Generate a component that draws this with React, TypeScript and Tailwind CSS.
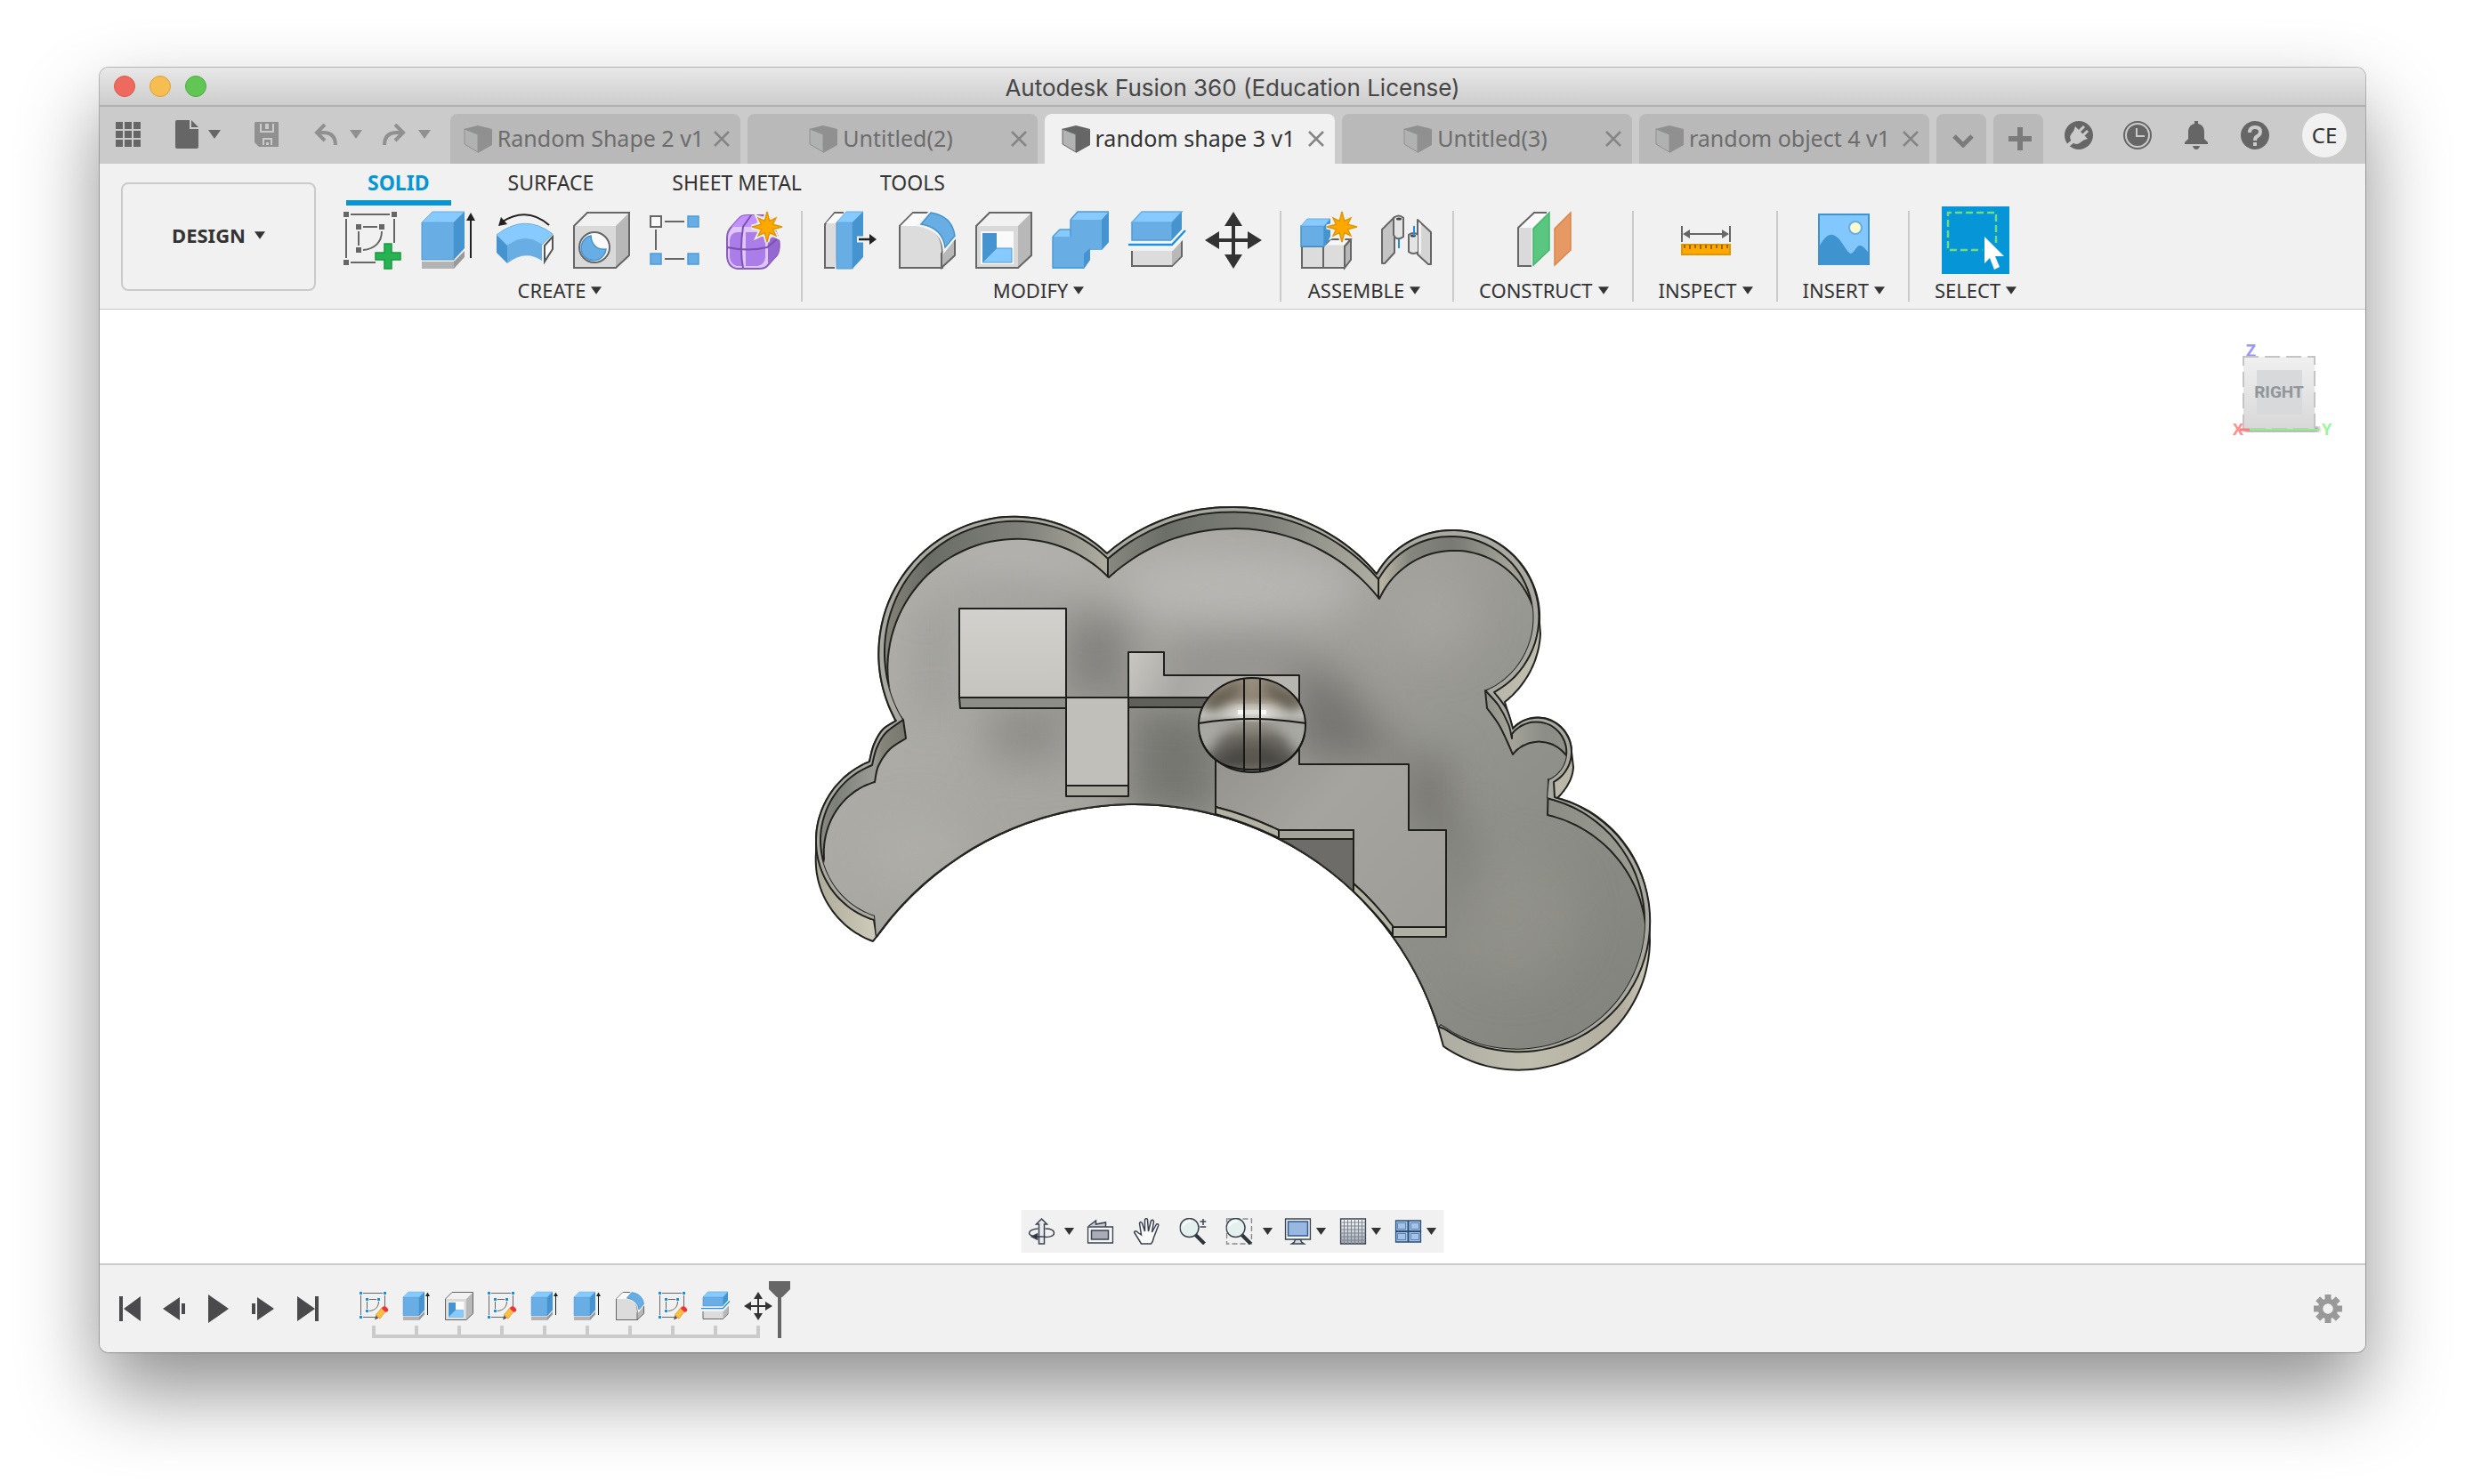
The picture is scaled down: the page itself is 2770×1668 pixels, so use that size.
import type { ReactNode } from "react";

type Pt = [number, number];

/* ---------- path helpers ---------- */

function curve(pts: Pt[], first = false): string {
  let d = `${first ? "M" : "L"}${pts[0][0]} ${pts[0][1]}`;
  for (let i = 0; i < pts.length - 1; i++) {
    const a = pts[i - 1] ?? pts[i];
    const b = pts[i];
    const c = pts[i + 1];
    const e = pts[i + 2] ?? c;
    d += `C${(b[0] + (c[0] - a[0]) / 6).toFixed(1)} ${(b[1] + (c[1] - a[1]) / 6).toFixed(1)} ${(c[0] - (e[0] - b[0]) / 6).toFixed(1)} ${(c[1] - (e[1] - b[1]) / 6).toFixed(1)} ${c[0]} ${c[1]}`;
  }
  return d;
}

function shape(parts: Pt[][]): string {
  return parts.map((p, i) => curve(p, i === 0)).join("") + "Z";
}

/* Points along a circle from one point to another; the ends are blended so that they meet the given points. */
function arc(cx: number, cy: number, r: number, from: Pt, to: Pt, clockwise = true): Pt[] {
  const n = 24;
  const a0 = Math.atan2(from[1] - cy, from[0] - cx);
  let a1 = Math.atan2(to[1] - cy, to[0] - cx);
  if (clockwise && a1 < a0) a1 += 2 * Math.PI;
  if (!clockwise && a1 > a0) a1 -= 2 * Math.PI;
  const d0 = Math.hypot(from[0] - cx, from[1] - cy) - r;
  const d1 = Math.hypot(to[0] - cx, to[1] - cy) - r;
  return Array.from({ length: n + 1 }, (_, i): Pt => {
    const t = i / n;
    const q = r + d0 * (1 - t) ** 3 + d1 * t ** 3;
    const a = a0 + (a1 - a0) * t;
    return [Math.round((cx + q * Math.cos(a)) * 10) / 10, Math.round((cy + q * Math.sin(a)) * 10) / 10];
  });
}

/* ---------- small shared pieces ---------- */

function Caret({ className }: { className: string }) {
  return (
    <svg viewBox="0 0 14 10" className={className} fill="currentColor" aria-hidden="true">
      <path d="M0 0h14L7 10z" />
    </svg>
  );
}

function Icon({ children, size = "size-16" }: { children: ReactNode; size?: string }) {
  return (
    <svg viewBox="0 0 64 64" className={`${size} shrink-0 overflow-visible`} fill="none" aria-hidden="true">
      {children}
    </svg>
  );
}

const Star = ({ x, y }: { x: number; y: number }) => {
  const pts = Array.from({ length: 16 }, (_, i) => {
    const r = i % 2 ? 7 : i % 4 === 0 ? 17 : 14;
    const a = (i * Math.PI) / 8 - Math.PI / 2;
    return `${(x + r * Math.cos(a)).toFixed(1)},${(y + r * Math.sin(a)).toFixed(1)}`;
  }).join(" ");
  return (
    <>
      <polygon points={pts} fill="none" stroke="#f1f1f1" strokeWidth="5" />
      <polygon points={pts} fill="#ffa900" stroke="#e39600" strokeWidth="1.5" />
    </>
  );
};

/* ---------- feature glyphs ---------- */

const SketchLines = ({ node }: { node: string }) => (
  <>
    <g stroke="#666" strokeWidth="2">
      <path d="M8 3h44M3 8v44M8 57h28M57 8v27M22 17h16M17 22v16M43 22C43 34 35 42 22 43" />
    </g>
    <g fill={node}>
      <path d="M0 0h6v6H0zM54 0h6v6h-6zM0 54h6v6H0zM14 14h6v6h-6zM40 14h6v6h-6zM14 40h6v6h-6z" />
    </g>
  </>
);

const CreateSketch = () => (
  <>
    <SketchLines node="#666" />
    <path d="M46 36h8v10h10v8H54v10h-8V54H36v-8h10z" fill="#27b351" stroke="#159a3e" strokeWidth="1.5" />
  </>
);

const EditSketch = () => (
  <>
    <SketchLines node="#1a8fe8" />
    <path d="M34 63l3-11 6 7z" fill="#555" />
    <path d="M37 52L50 36l9 7-13 17z" fill="#fbbf45" stroke="#f0a020" strokeWidth="2" />
    <path d="M51 35q4-5 10 0t2 9l-4 2-9-8z" fill="#f23038" />
  </>
);

const Extrude = () => (
  <>
    <path d="M2 56h36v8H2z" fill="#b3b3b3" />
    <path d="M38 56l12-12v7L38 64z" fill="#999" />
    <path d="M2 12h36v42H2z" fill="#68aee4" stroke="#4f9bd6" strokeWidth="1" />
    <path d="M2 12L14 0h36L38 12z" fill="#87caff" stroke="#68aee4" strokeWidth="1" />
    <path d="M38 12L50 0v41L38 54z" fill="#4594d0" />
    <path d="M57 8v44" stroke="#222" strokeWidth="2" />
    <path d="M57 1l5 9H52z" fill="#222" />
  </>
);

const Revolve = () => (
  <>
    <path d="M59 15Q34-7 5 12" stroke="#222" strokeWidth="2" />
    <path d="M2 16l3-10 7 8z" fill="#222" />
    <path d="M0 26l12 12v20L0 46z" fill="#4594d0" />
    <path d="M0 26q32-25 63-1L51 37q-19-14-39 1z" fill="#87caff" stroke="#68aee4" strokeWidth="1" />
    <path d="M12 38q20-15 39-1v18q-19-13-39 3z" fill="#68aee4" />
    <path d="M54 38l9-10v14l-9 14z" fill="#fafafa" stroke="#555" strokeWidth="2" />
  </>
);

const GreyBox = () => (
  <>
    <path d="M1 16L16 1h47L48 16z" fill="#f1f1f1" />
    <path d="M48 16L63 1v48L48 63z" fill="#b8b8b8" />
    <path d="M1 16h47v47H1z" fill="#d9d9d9" />
    <path d="M1 16L16 1h47v48L48 63H1z" stroke="#666" strokeWidth="2" />
  </>
);

const Hole = () => (
  <>
    <GreyBox />
    <circle cx="24" cy="40" r="17" fill="#fafafa" stroke="#666" strokeWidth="2" />
    <path d="M20 27c1 11 7 16 17 15a14 14 0 1 1-17-15z" fill="#68aee4" stroke="#4594d0" strokeWidth="1.5" />
  </>
);

const Pattern = () => (
  <>
    <path d="M17 11h22M7 20v23M17 53h22" stroke="#666" strokeWidth="2" />
    <path d="M1 5h12v12H1z" fill="#f8f8f8" stroke="#666" strokeWidth="2" />
    <path d="M43 5h12v12H43zM1 47h12v12H1zM43 47h12v12H43z" fill="#68aee4" stroke="#4f9bd6" strokeWidth="1.5" />
  </>
);

const Form = () => (
  <>
    <path d="M1 29Q1 22 6 17L15 7q3-3 9-3h18q6 0 10 6l6 19q3 6 1 15-1 5-5 8l-8 9q-3 3-9 3H13Q2 63 1 50z" fill="#dfc6ff" stroke="#8a5cc0" strokeWidth="2" />
    <path d="M6 17L15 7q3-3 9-3h16l-9 13z" fill="#c292ff" />
    <path d="M4 32q1-9 9-9h5v38h-6q-7-2-8-10zM22 23h14q7 0 8 8v20q-1 9-9 10H22z" fill="#ab7de8" />
    <path d="M47 31l12-5v21l-12 11z" fill="#9567d2" />
    <path d="M19 63q-4-20 0-46l9-13M1 40q24 5 45 0l12-10" stroke="#7d51b4" strokeWidth="2" />
    <Star x={46} y={17} />
  </>
);

const PressPull = () => (
  <>
    <path d="M14 63H3V14L14 1h10" stroke="#666" strokeWidth="2" fill="#dcdcdc" />
    <path d="M4 13L14 2h12L16 13z" fill="#fafafa" />
    <path d="M16 12h18v52H16z" fill="#68aee4" stroke="#4f9bd6" strokeWidth="1" />
    <path d="M16 12L27 0h19L34 12z" fill="#87caff" stroke="#68aee4" strokeWidth="1" />
    <path d="M34 12L46 0v51L34 64z" fill="#4594d0" />
    <path d="M39 31h15" stroke="#f1f1f1" strokeWidth="7" />
    <path d="M41 31h14" stroke="#222" strokeWidth="2.5" />
    <path d="M53 25l8 6-8 6z" fill="#222" />
  </>
);

const Fillet = () => (
  <>
    <path d="M1 16L16 1h18L22 15q28 4 27 31v17H1z" fill="#dcdcdc" stroke="#666" strokeWidth="2" />
    <path d="M2 16L16 2h17L22 16z" fill="#fafafa" />
    <path d="M48 63V47l15-17v19z" fill="#b8b8b8" stroke="#666" strokeWidth="2" />
    <path d="M1 16v47h47" stroke="#666" strokeWidth="2" />
    <path d="M22 15L35 0q26 3 29 28L51 44Q50 20 22 15z" fill="#68aee4" stroke="#f4f4f4" strokeWidth="3" />
    <path d="M25 14L36 1q24 4 27 26L52 40Q49 18 25 14z" fill="#68aee4" stroke="#4594d0" strokeWidth="1.5" />
  </>
);

const Shell = () => (
  <>
    <GreyBox />
    <path d="M6 22h37v37H6z" fill="#fafafa" />
    <path d="M8 24h16v17L8 57z" fill="#4594d0" />
    <path d="M24 41h17v16H8z" fill="#87caff" stroke="#4f9bd6" strokeWidth="1" />
  </>
);

const Combine = () => (
  <>
    <path d="M1 28L9 20h12V9l8-9h35v34l-8 9H43v11l-7 10H1z" fill="#68aee4" />
    <path d="M1 28L9 20h12v8zM21 9l8-9h35l-8 9z" fill="#87caff" />
    <path d="M56 9l8-9v34l-8 9zM36 47l7-6v13l-7 10z" fill="#4594d0" />
    <path d="M1 28v35h35M21 9v19M1 28l8-8h12M21 9l8-9h35" stroke="#4f9bd6" strokeWidth="1.5" />
  </>
);

const Split = () => (
  <>
    <path d="M4 42h45l11-11v19L49 61H4z" fill="#dcdcdc" stroke="#666" strokeWidth="2" />
    <path d="M49 42l10-9v17L49 60z" fill="#b8b8b8" />
    <path d="M2 42h47l12-13" stroke="#f1f1f1" strokeWidth="4" />
    <path d="M4 12h45v20H4z" fill="#68aee4" stroke="#4f9bd6" strokeWidth="1.5" />
    <path d="M4 12L15 0h45L49 12z" fill="#87caff" stroke="#68aee4" strokeWidth="1.5" />
    <path d="M49 12L60 0v20L49 32z" fill="#4594d0" />
    <path d="M0 37h49l15-16" stroke="#f7f7f7" strokeWidth="7" />
    <path d="M0 37h49l15-16" stroke="#1a8fe8" strokeWidth="2.5" />
  </>
);

const Move = () => (
  <>
    <path d="M32 10v44M10 32h44" stroke="#333" strokeWidth="4" />
    <path d="M32 0l10 16H22zM32 64l10-16H22zM0 32l16-10v20zM64 32L48 22v20z" fill="#333" />
  </>
);

const NewComponent = () => (
  <>
    <path d="M1 39h24v24H1zM25 39h24v24H25z" fill="#dcdcdc" stroke="#666" strokeWidth="2" />
    <path d="M25 39l8-8h23l-7 8z" fill="#f6f6f6" stroke="#666" strokeWidth="2" />
    <path d="M49 39l7-8v23l-7 9z" fill="#b8b8b8" stroke="#666" strokeWidth="2" />
    <path d="M26 39h22" stroke="#dcdcdc" strokeWidth="3" />
    <path d="M0 16h26v23H0z" fill="#68aee4" stroke="#4594d0" strokeWidth="1.5" />
    <path d="M0 16l7-8h26l-7 8z" fill="#87caff" stroke="#68aee4" strokeWidth="1" />
    <path d="M26 16l7-8v23l-7 8z" fill="#4594d0" />
    <Star x={46} y={17} />
  </>
);

const Joint = () => (
  <>
    <g stroke="#666" strokeWidth="2" strokeLinejoin="round">
      <path d="M5 20L19 6v40L8 58H5z" fill="#c4c4c4" />
      <path d="M18 7q6-5 11 0v21q-5 4-9 1l-2-3z" fill="#e4e4e4" />
      <path d="M45 9l15 14v36h-3L45 48z" fill="#d4d4d4" />
      <path d="M35 26q5-4 11 0v19q-6 4-11 0z" fill="#e4e4e4" />
    </g>
    <path d="M46 11l3 3v34l-3-2z" fill="#f2f2f2" />
    <ellipse cx="24" cy="8" rx="3" ry="1.5" fill="#444" />
    <ellipse cx="40" cy="27" rx="3" ry="1.5" fill="#444" />
    <path d="M24 31v10M41 16v11" stroke="#1a8fe8" strokeWidth="2" />
  </>
);

const Construct = () => (
  <>
    <path d="M18 61H3V18L21 1h15L19 18z" fill="#fafafa" />
    <path d="M3 18h15v43H3z" fill="#dadada" />
    <path d="M18 61H3V18L21 1h14" stroke="#666" strokeWidth="2" />
    <path d="M20 19L38 1v42L20 60z" fill="#5ac780" stroke="#44b56c" strokeWidth="1.5" />
    <path d="M44 19L62 1v42L44 60z" fill="#e69963" stroke="#d9854a" strokeWidth="1.5" />
  </>
);

const Measure = () => (
  <>
    <path d="M5 16v18M59 16v18M10 25h44" stroke="#666" strokeWidth="2" />
    <path d="M6 25l8-5v10zM58 25l-8-5v10z" fill="#666" />
    <path d="M5 37h54v11H5z" fill="#ffa900" stroke="#e39600" strokeWidth="2" />
    <path d="M8 37v4M14 37v5M20 37v4M26 37v5M32 37v4M38 37v5M44 37v4M50 37v5M56 37v4" stroke="#7a5a10" strokeWidth="1.5" />
  </>
);

const Picture = () => (
  <>
    <path d="M3 3h58v57H3z" fill="#82c8ff" />
    <circle cx="45" cy="18" r="7" fill="#fdfccf" stroke="#68aee4" strokeWidth="2" />
    <path d="M4 40C11 26 17 24 22 27c7 3 13 19 18 20 4-1 6-9 10-9s8 6 11 10v12H3z" fill="#3f93cf" />
    <path d="M4 3h56v56H4z" stroke="#3f93cf" strokeWidth="2" />
  </>
);

/* ---------- ribbon ---------- */

type Tool = { name: string; art: ReactNode };
type Group = { label: string; tools: Tool[] };

const groups: Group[] = [
  {
    label: "CREATE",
    tools: [
      { name: "Create Sketch", art: <CreateSketch /> },
      { name: "Extrude", art: <Extrude /> },
      { name: "Revolve", art: <Revolve /> },
      { name: "Hole", art: <Hole /> },
      { name: "Rectangular Pattern", art: <Pattern /> },
      { name: "Create Form", art: <Form /> },
    ],
  },
  {
    label: "MODIFY",
    tools: [
      { name: "Press Pull", art: <PressPull /> },
      { name: "Fillet", art: <Fillet /> },
      { name: "Shell", art: <Shell /> },
      { name: "Combine", art: <Combine /> },
      { name: "Split Body", art: <Split /> },
      { name: "Move/Copy", art: <Move /> },
    ],
  },
  {
    label: "ASSEMBLE",
    tools: [
      { name: "New Component", art: <NewComponent /> },
      { name: "Joint", art: <Joint /> },
    ],
  },
  { label: "CONSTRUCT", tools: [{ name: "Offset Plane", art: <Construct /> }] },
  { label: "INSPECT", tools: [{ name: "Measure", art: <Measure /> }] },
  { label: "INSERT", tools: [{ name: "Insert Image", art: <Picture /> }] },
];

function GroupLabel({ label, wide = false }: { label: string; wide?: boolean }) {
  return (
    <button type="button" className={`flex h-9 items-center gap-1.5 pl-3 text-[22px] leading-7 ${wide ? "pr-5" : "pr-3"}`}>
      {label}
      <Caret className="h-[9px] w-3" />
    </button>
  );
}

function Ribbon() {
  return (
    <section className="flex h-[164px] shrink-0 border-b border-[#c6c6c6] bg-[#f1f1f1] pl-6 text-[#333]">
      <button
        type="button"
        className="mt-[21px] flex h-[122px] w-[219px] shrink-0 items-center justify-center gap-2.5 rounded-lg border-2 border-[#cacaca] pb-1 text-[22px] font-bold"
      >
        DESIGN
        <Caret className="h-[9px] w-3" />
      </button>
      <div className="flex min-w-0 flex-1 flex-col">
        <nav className="flex h-12 shrink-0 items-start gap-10 pl-[34px] text-[23px]">
          <button type="button" className="h-[47px] border-b-[6px] border-[#0696d7] px-6 pt-0.5 font-bold text-[#0696d7]">
            SOLID
          </button>
          {["SURFACE", "SHEET METAL", "TOOLS"].map((t) => (
            <button key={t} type="button" className="h-[47px] border-b-[6px] border-transparent px-6 pt-0.5">
              {t}
            </button>
          ))}
        </nav>
        <div className="flex pl-[9px]">
          {groups.map((g) => (
            <div key={g.label} className="flex">
              <div className="flex flex-col items-center pr-3.5 pl-4">
                <div className="flex gap-2.5">
                  {g.tools.map((t) => (
                    <button key={t.name} type="button" aria-label={t.name} className="flex size-[76px] items-center justify-center">
                      <Icon>{t.art}</Icon>
                    </button>
                  ))}
                </div>
                <GroupLabel label={g.label} wide={g.tools.length > 1} />
              </div>
              <div className="mt-[5px] h-[102px] w-0.5 bg-[#cacaca]" />
            </div>
          ))}
          <div className="flex flex-col items-center pl-4">
            <button type="button" aria-label="Select" aria-pressed="true" className="size-[76px] bg-[#0696d7]">
              <svg viewBox="0 0 76 76" className="size-full" fill="none" aria-hidden="true">
                <path d="M7 7h54v42H7z" stroke="#72dc7c" strokeWidth="2.4" strokeDasharray="8 4" strokeDashoffset="4" />
                <path d="M48 34v30l6-6 5 13 6-3-5-12h10z" fill="#fff" stroke="#0696d7" strokeWidth="5" />
                <path d="M48 34v30l6-6 5 13 6-3-5-12h10z" fill="#fff" />
              </svg>
            </button>
            <GroupLabel label="SELECT" />
          </div>
        </div>
      </div>
    </section>
  );
}

/* ---------- document tabs and quick access ---------- */

const tabs = [
  { name: "Random Shape 2 v1", active: false },
  { name: "Untitled(2)", active: false },
  { name: "random shape 3 v1", active: true },
  { name: "Untitled(3)", active: false },
  { name: "random object 4 v1", active: false },
];

function DocTab({ name, active }: { name: string; active: boolean }) {
  return (
    <div
      className={`flex h-14 min-w-0 flex-1 items-center rounded-t-lg ${active ? "bg-[#f1f1f1] text-[#333]" : "bg-[#b9b9b9] text-[#6c6c6c]"}`}
    >
      <button type="button" className="flex min-w-0 flex-1 items-center justify-center gap-1.5 pl-1 text-[25px] whitespace-nowrap">
        <svg viewBox="0 0 32 31" className="h-[31px] w-8 shrink-0" aria-hidden="true">
          <path d="M0 4L16 0l16 4-16 6z" fill={active ? "#666" : "#909090"} />
          <path d="M16 9l16-5v18L16 31z" fill={active ? "#666" : "#909090"} />
          <path d="M1 4l15 6v20L1 21z" fill={active ? "#b2b4b3" : "#b0b2b1"} stroke={active ? "#666" : "#909090"} strokeWidth="1" />
        </svg>
        {name}
      </button>
      <button type="button" aria-label={`Close ${name}`} className="mr-3 text-[#858585]">
        <svg viewBox="0 0 18 18" className="size-[18px]" fill="none" stroke="currentColor" strokeWidth="2.5" aria-hidden="true">
          <path d="M1 1l16 16M17 1L1 17" />
        </svg>
      </button>
    </div>
  );
}

function TopBar() {
  return (
    <section className="flex h-16 shrink-0 items-end bg-[#cbcbcb] pl-[18px] text-[#666]">
      <div className="flex h-16 w-[376px] shrink-0 items-center pb-0.5">
        <button type="button" aria-label="Data Panel">
          <svg viewBox="0 0 28 28" className="size-7" fill="currentColor" aria-hidden="true">
            <path d="M0 0h8v8H0zM10 0h8v8h-8zM20 0h8v8h-8zM0 10h8v8H0zM10 10h8v8h-8zM20 10h8v8h-8zM0 20h8v8H0zM10 20h8v8h-8zM20 20h8v8h-8z" />
          </svg>
        </button>
        <button type="button" aria-label="File" className="ml-[39px] flex items-center gap-[11px]">
          <svg viewBox="0 0 26 32" className="h-8 w-[26px]" fill="currentColor" aria-hidden="true">
            <path d="M2 0h14v10h10v20q0 2-2 2H2q-2 0-2-2V2q0-2 2-2z" />
            <path d="M18 0l8 8h-8z" />
          </svg>
          <Caret className="h-2.5 w-3.5" />
        </button>
        <button type="button" aria-label="Save" className="ml-[38px] text-[#909090]">
          <svg viewBox="0 0 28 28" className="size-7" fill="currentColor" fillRule="evenodd" aria-hidden="true">
            <path d="M1 0h26v28H5l-5-5V1zM6 2v10h16V2zM9 18v8h11v-8z" />
            <path d="M8 2h4v6h4V2h4v8H8zM11 20h7v6h-2v-3h-3v3h-2z" />
          </svg>
        </button>
        <button type="button" aria-label="Undo" className="ml-[39px] flex items-center gap-3.5 text-[#909090]">
          <svg viewBox="0 0 26 24" className="h-6 w-[26px]" fill="none" stroke="currentColor" strokeWidth="4" aria-hidden="true">
            <path d="M12 1L3 10l9 9M3 10h7q14 0 14 14" />
          </svg>
          <Caret className="h-2.5 w-3.5" />
        </button>
        <button type="button" aria-label="Redo" className="ml-[23px] flex items-center gap-3.5 text-[#909090]">
          <svg viewBox="0 0 26 24" className="h-6 w-[26px]" fill="none" stroke="currentColor" strokeWidth="4" aria-hidden="true">
            <path d="M14 1l9 9-9 9M23 10h-7Q2 10 2 24" />
          </svg>
          <Caret className="h-2.5 w-3.5" />
        </button>
      </div>
      <div className="flex min-w-0 flex-1 gap-2">
        {tabs.map((t) => (
          <DocTab key={t.name} {...t} />
        ))}
        <button type="button" aria-label="All documents" className="flex w-14 shrink-0 items-center justify-center rounded-t-lg bg-[#b9b9b9] pt-1 pl-1 text-[#7b7b7b]">
          <svg viewBox="0 0 24 15" className="h-[15px] w-6" fill="none" stroke="currentColor" strokeWidth="5" aria-hidden="true">
            <path d="M2 2l10 10L22 2" />
          </svg>
        </button>
        <button type="button" aria-label="New design" className="flex w-14 shrink-0 items-center justify-center rounded-t-lg bg-[#b9b9b9] pl-1 text-[#7b7b7b]">
          <svg viewBox="0 0 26 26" className="size-[26px]" stroke="currentColor" strokeWidth="6" aria-hidden="true">
            <path d="M13 0v26M0 13h26" />
          </svg>
        </button>
      </div>
      <div className="flex h-16 shrink-0 items-center pr-[21px] pl-6">
        <div className="mr-[37px] flex items-center gap-[34px]">
          <button type="button" aria-label="Extensions">
            <svg viewBox="0 0 32 32" className="size-8" fill="none" aria-hidden="true">
              <circle cx="16" cy="16" r="16" fill="#666" />
              <path d="M12 6l14 14q-5 1-8 4-5 4-9 0-5-5-1-10 3-3 4-8z" fill="#cbcbcb" />
              <path d="M16 12l6-6M20 17l6-6" stroke="#cbcbcb" strokeWidth="3" />
              <path d="M9 23l-8 7" stroke="#cbcbcb" strokeWidth="4" />
            </svg>
          </button>
          <button type="button" aria-label="Job Status">
            <svg viewBox="0 0 32 32" className="size-8" fill="none" aria-hidden="true">
              <circle cx="16" cy="16" r="15" stroke="#666" strokeWidth="2" />
              <circle cx="16" cy="16" r="12" fill="#666" />
              <path d="M15 8v9h9" stroke="#cbcbcb" strokeWidth="2" />
            </svg>
          </button>
          <button type="button" aria-label="Notifications">
            <svg viewBox="0 0 32 32" className="size-8" fill="currentColor" aria-hidden="true">
              <path d="M14 0h4v3q6 1 7 8v9l4 4v2H3v-2l4-4v-9q1-7 7-8zM12 28h8q-1 4-4 4t-4-4z" />
            </svg>
          </button>
          <button type="button" aria-label="Help">
            <svg viewBox="0 0 32 32" className="size-8" fill="none" aria-hidden="true">
              <circle cx="16" cy="16" r="16" fill="#666" />
              <path d="M10 13q0-6 6-6t6 5q0 3-3 5-3 1-3 5" stroke="#cbcbcb" strokeWidth="4" />
              <path d="M14 24h4v4h-4z" fill="#cbcbcb" />
            </svg>
          </button>
        </div>
        <button type="button" className="flex size-[50px] items-center justify-center rounded-full bg-[#f1f1f1] text-2xl text-[#333]">
          CE
        </button>
      </div>
    </section>
  );
}

/* ---------- the modelled body ---------- */

const rimTop: Pt[][] = [
  arc(1012, 945, 95, [917, 946], [977, 856]),
  [[977, 856], [982, 837], [992, 820], [1007, 810]],
  arc(1141, 732, 151.5, [1006, 809], [1244, 622]),
  arc(1384, 783, 213, [1244, 622], [1547, 645]),
];

const base = arc(1275, 1261, 357, [1622, 1176], [981, 1058], false);
const baseInner = arc(1275, 1261, 357, [1616, 1154], [985, 1053], false);

const bodyPath = shape([
  arc(1013, 967, 96, [981, 1058], [917, 958]),
  ...rimTop,
  arc(1632, 694, 98, [1547, 645], [1730, 700]),
  arc(1632, 708, 99, [1731, 712], [1691, 789]),
  [[1691, 789], [1700, 819]],
  arc(1727, 845, 39, [1700, 819], [1766, 845]),
  arc(1728, 858, 41, [1768, 862], [1750, 897]),
  arc(1708, 1034, 146, [1750, 897], [1853, 1030]),
  arc(1708, 1056, 146, [1854, 1058], [1622, 1176]),
  base,
]);

const rimPath = shape([
  arc(1012, 945, 95, [982, 1034], [917, 946]),
  ...rimTop,
  arc(1632, 694, 98, [1547, 645], [1679, 778]),
  [[1679, 778], [1693, 797], [1700, 818]],
  arc(1727, 845, 39, [1700, 819], [1746, 879]),
  [[1746, 879], [1747, 896]],
  arc(1708, 1034, 147, [1747, 896], [1622, 1156]),
  baseInner,
]);

const innerPath = shape([
  arc(1012, 945, 90, [983, 1029], [980, 860]),
  [[980, 860], [985, 841], [995, 824], [1015, 809]],
  arc(1141, 733, 147, [1015, 809], [1245, 628]),
  arc(1384, 784, 208, [1245, 628], [1549, 651]),
  arc(1631, 696, 93, [1549, 651], [1669, 776]),
  [[1669, 776], [1684, 793], [1695, 814], [1699, 830]],
  arc(1727, 845, 33, [1699, 825], [1740, 876]),
  [[1740, 876], [1738, 897]],
  arc(1706, 1035, 142, [1738, 897], [1619, 1151]),
  baseInner,
]);

const floorPath = shape([
  [[960, 1100], [915, 1020]],
  arc(1016, 958, 90, [926, 965], [983, 879]),
  [[983, 879], [987, 861], [1000, 842], [1018, 830]],
  [[1018, 830], [1015, 809]],
  arc(1144, 752, 147, [1004, 795], [1246, 649]),
  arc(1387, 802, 208, [1246, 649], [1550, 673]),
  arc(1634, 711, 92, [1550, 673], [1726, 730]),
  [[1740, 772], [1669, 776]],
  [[1671, 796], [1684, 814], [1693, 832], [1700, 848]],
  arc(1728, 873, 40, [1700, 848], [1768, 875]),
  [[1740, 876], [1739, 916]],
  arc(1706, 1056, 144, [1739, 916], [1850, 1060]),
  [[1870, 1200], [1640, 1230]],
  base,
]);

function Model() {
  return (
    <svg viewBox="911 564 948 640" className="h-[640px] w-[948px]" fill="none" role="img" aria-label="Model body, right view">
      <defs>
        <linearGradient id="floor" gradientUnits="userSpaceOnUse" x1="1100" y1="600" x2="1750" y2="1180">
          <stop offset="0" stopColor="#afaea9" />
          <stop offset="0.4" stopColor="#a3a29d" />
          <stop offset="0.7" stopColor="#92928c" />
          <stop offset="1" stopColor="#85857f" />
        </linearGradient>
        <linearGradient id="wall" gradientUnits="userSpaceOnUse" x1="911" y1="0" x2="1859" y2="0">
          <stop offset="0" stopColor="#8f8f88" />
          <stop offset="0.03" stopColor="#7d7f79" />
          <stop offset="0.075" stopColor="#9a9b95" />
          <stop offset="0.085" stopColor="#858479" />
          <stop offset="0.14" stopColor="#6a6c66" />
          <stop offset="0.25" stopColor="#7f807a" />
          <stop offset="0.35" stopColor="#aeaca0" />
          <stop offset="0.355" stopColor="#86877f" />
          <stop offset="0.42" stopColor="#6c6f68" />
          <stop offset="0.54" stopColor="#7e8079" />
          <stop offset="0.67" stopColor="#aeada2" />
          <stop offset="0.677" stopColor="#b8b3a2" />
          <stop offset="0.71" stopColor="#85877f" />
          <stop offset="0.76" stopColor="#777972" />
          <stop offset="0.83" stopColor="#a3a399" />
          <stop offset="0.87" stopColor="#8b8d86" />
          <stop offset="1" stopColor="#9d9d92" />
        </linearGradient>
        <linearGradient id="skirt" gradientUnits="userSpaceOnUse" x1="911" y1="0" x2="1859" y2="0">
          <stop offset="0" stopColor="#aaa796" />
          <stop offset="0.07" stopColor="#cbc8b8" />
          <stop offset="0.75" stopColor="#aeada2" />
          <stop offset="0.85" stopColor="#bfbdae" />
          <stop offset="0.96" stopColor="#b3ae9f" />
          <stop offset="1" stopColor="#d0ccbb" />
        </linearGradient>
        <linearGradient id="block" gradientUnits="userSpaceOnUse" x1="0" y1="680" x2="0" y2="890">
          <stop offset="0" stopColor="#d2d1cd" />
          <stop offset="0.5" stopColor="#c5c4be" />
          <stop offset="1" stopColor="#b7b6b0" />
        </linearGradient>
        <linearGradient id="step" gradientUnits="userSpaceOnUse" x1="1270" y1="730" x2="1420" y2="800">
          <stop offset="0" stopColor="#c8c7c2" />
          <stop offset="0.4" stopColor="#a9a8a4" />
          <stop offset="1" stopColor="#b6b5b0" />
        </linearGradient>
        <linearGradient id="lower" gradientUnits="userSpaceOnUse" x1="1380" y1="850" x2="1600" y2="1040">
          <stop offset="0" stopColor="#95948f" />
          <stop offset="0.4" stopColor="#a5a49f" />
          <stop offset="1" stopColor="#9e9d98" />
        </linearGradient>
        <linearGradient id="ball" x1="0" y1="0" x2="0" y2="1">
          <stop offset="0" stopColor="#9c9384" />
          <stop offset="0.2" stopColor="#938979" />
          <stop offset="0.34" stopColor="#c9c6bf" />
          <stop offset="0.4" stopColor="#d5d4d0" />
          <stop offset="0.48" stopColor="#96938b" />
          <stop offset="0.65" stopColor="#6b6962" />
          <stop offset="0.88" stopColor="#57554f" />
          <stop offset="1" stopColor="#7a7973" />
        </linearGradient>
        <filter id="soft" x="-50%" y="-50%" width="200%" height="200%" colorInterpolationFilters="sRGB">
          <feGaussianBlur stdDeviation="24" />
        </filter>
        <filter id="softer" x="-50%" y="-50%" width="200%" height="200%" colorInterpolationFilters="sRGB">
          <feGaussianBlur stdDeviation="7" />
        </filter>
        <clipPath id="inside">
          <path d={innerPath} />
        </clipPath>
        <clipPath id="floorClip">
          <path d={floorPath} />
        </clipPath>
        <clipPath id="ballClip">
          <ellipse cx="1407" cy="815" rx="60" ry="53" />
        </clipPath>
      </defs>

      <g stroke="#22221f" strokeWidth="2" strokeLinejoin="round">
        <path d={bodyPath} fill="url(#skirt)" />
        <path d={rimPath} fill="#a9a9a2" />
        <path d={innerPath} fill="url(#wall)" />
      </g>

      <g clipPath="url(#inside)">
        <path d={floorPath} fill="url(#floor)" />
        <g clipPath="url(#floorClip)">
          <g filter="url(#soft)">
            <ellipse cx="1390" cy="660" rx="140" ry="40" fill="#c4c3bf" opacity="0.6" />
            <ellipse cx="1150" cy="635" rx="80" ry="25" fill="#bcbbb7" opacity="0.6" />
            <path d="M1035 680h30v120h-30z" fill="#868581" opacity="0.5" />
            <path d="M1195 690h75v95h-75z" fill="#787773" opacity="0.8" />
            <path d="M1080 655h110v30h-110z" fill="#8a8985" opacity="0.5" />
            <path d="M1310 720h150v40h-150z" fill="#807f7b" opacity="0.6" />
            <path d="M1110 790h90v65h-90z" fill="#7f7e7a" opacity="0.65" />
            <path d="M1265 790h110v130h-110z" fill="#6f6e6a" opacity="0.85" />
            <path d="M1455 750h40l85 105h-125z" fill="#6a6965" opacity="0.8" />
            <path d="M1583 850h42v85h-42z" fill="#676662" opacity="0.75" />
            <path d="M1625 920h25v120h-25z" fill="#6c6b67" opacity="0.65" />
            <ellipse cx="1610" cy="690" rx="50" ry="50" fill="#adaca7" opacity="0.5" />
            <ellipse cx="1700" cy="1030" rx="70" ry="70" fill="#94948d" opacity="0.6" />
            <ellipse cx="1030" cy="960" rx="60" ry="45" fill="#b3b2ac" opacity="0.55" />
          </g>
          <path d="M1437 943h84v60z" fill="#6d6c69" />
        </g>
        <path d={floorPath} stroke="#22221f" strokeWidth="2" strokeLinejoin="round" />
        <path d="M1245 628v21M1549 651v22" stroke="#22221f" strokeWidth="2" />
      </g>

      <g stroke="#1f1f1c" strokeWidth="2" strokeLinejoin="round">
        <path d="M1078 784h120v12h-119z" fill="#8d8e88" />
        <path d="M1078 684h120v100h-120z" fill="url(#block)" />
        <path d="M1268 784h95v11h-95z" fill="#60615b" />
        <path d="M1268 784v-51h40v26h152v25z" fill="url(#step)" stroke="none" />
        <path d="M1366 784h94v75h123v74h42v109h-60q-22-30-44-49v-60h-84q-36-17-71-26z" fill="url(#lower)" stroke="none" />
        <path d="M1363 784h-95v-51h40v26h152v100h123v74h42v109h-60q-22-30-44-49v-60h-84q-36-17-71-26v-60" />
        <path d="M1198 784h70v99h-70z" fill="#c0bfb9" />
        <path d="M1198 883h70v12h-70z" fill="#aaa99f" />
        <path d="M1366 907q36 9 71 26v9q-35-17-71-27z" fill="#b3b2a5" />
        <path d="M1437 933h84v10h-84z" fill="#a3a298" />
        <path d="M1521 993q24 21 45 49v10q-22-28-45-50z" fill="#b3b2a5" />
        <path d="M1565 1042h60v11h-60z" fill="#b0afa3" />
        <path d="M1521 943v59" />
      </g>

      <g clipPath="url(#ballClip)">
        <ellipse cx="1407" cy="815" rx="60" ry="53" fill="url(#ball)" />
        <g filter="url(#softer)">
          <path d="M1345 790l50-25v10l-30 25zM1470 790l-50-25v10l30 25z" fill="#5c574b" />
          <path d="M1340 806h55l-20 16-20 30-20-10zM1475 806h-55l20 16 20 30 20-10z" fill="#a9a9a4" />
          <path d="M1375 850q32-30 64 0v12h-64z" fill="#3f3e3a" opacity="0.6" />
        </g>
        <ellipse cx="1407" cy="801" rx="20" ry="5" fill="#fff" filter="url(#softer)" />
        <path d="M1391 798h32v5h-32z" fill="#fff" opacity="0.85" />
        <path d="M1398 760h18v110h-18z" fill="#8d8474" opacity="0.25" />
      </g>
      <g stroke="#191917" strokeWidth="2">
        <ellipse cx="1407" cy="815" rx="60" ry="53" />
        <path d="M1348 826q10 39 59 39t59-39M1347 813q60-10 121 0M1398 763v105M1416 763v105" />
      </g>
    </svg>
  );
}

function ViewCube() {
  return (
    <svg viewBox="-4 -8 128 120" className="absolute top-7 right-7 h-[120px] w-32" aria-label="View cube">
      <defs>
        <linearGradient id="cubeFace" x1="0" y1="0" x2="0" y2="1">
          <stop offset="0" stopColor="#f0f0f0" />
          <stop offset="1" stopColor="#d8d8d8" />
        </linearGradient>
        <filter id="cubeBlur">
          <feGaussianBlur stdDeviation="2" />
        </filter>
      </defs>
      <path d="M16 96h84v5H16z" fill="#777" filter="url(#cubeBlur)" />
      <text x="18" y="17" fontSize="19" fontWeight="700" fill="#9b95ff">Z</text>
      <path d="M15 17h80v81H15z" fill="url(#cubeFace)" />
      <path d="M15 17h80v81H15z" fill="none" stroke="#c4c4c4" strokeWidth="2" strokeDasharray="17 7" />
      <path d="M30 32h51v50H30z" fill="#d7d9db" />
      <path d="M20 99h80" stroke="#8fee8f" strokeWidth="2" />
      <path d="M11 99h11" stroke="#ff7a7a" strokeWidth="3" />
      <text x="55" y="63" textAnchor="middle" fontFamily="Roboto, sans-serif" fontSize="19" fontWeight="700" fill="#90959a">RIGHT</text>
      <text x="3" y="105" fontSize="18" fontWeight="700" fill="#ff8f8f">X</text>
      <text x="103" y="105" fontSize="18" fontWeight="700" fill="#9cf59c">Y</text>
    </svg>
  );
}

/* ---------- navigation bar ---------- */

function NavIcon({ children }: { children: ReactNode }) {
  return (
    <svg viewBox="0 0 30 30" className="size-[30px]" fill="none" stroke="#3b4350" strokeWidth="1.5" aria-hidden="true">
      {children}
    </svg>
  );
}

const Lens = () => (
  <>
    <path d="M18 19l10 10" stroke="#2f353d" strokeWidth="4" />
    <circle cx="11" cy="11" r="10.5" fill="#e3f0ee" />
    <path d="M4 9q3-6 9-5" stroke="#fff" strokeWidth="2" />
  </>
);

function NavBar() {
  const caret = "h-2 w-3 text-[#333]";
  return (
    <div className="absolute bottom-3 left-1/2 flex h-12 -translate-x-1/2 items-center bg-[#f1f1f1] px-2">
      <button type="button" aria-label="Orbit" className="flex items-center gap-2.5">
        <NavIcon>
          <path d="M11 12q-10 1-10 5t14 4.500 14-4.500-10-5" />
          <path d="M12 29V7H9l6-6 6 6h-3v22z" fill="#e8eaee" />
          <path d="M11 21h8" />
          <path d="M4 21l6-3v6z" fill="#2b2f38" />
        </NavIcon>
        <Caret className={caret} />
      </button>
      <button type="button" aria-label="Look At" className="ml-3.5">
        <NavIcon>
          <path d="M2 9l8-6v4l11-2v5" fill="#c9ccd3" />
          <path d="M1 10h28v18H1z" fill="#f7f8fa" />
          <path d="M5 14h19v10H5z" fill="#a9adb7" />
        </NavIcon>
      </button>
      <button type="button" aria-label="Pan" className="ml-[22px]">
        <NavIcon>
          <path d="M9 29q-3-5-8-13 1-3 5 1l3 2L7 6q1-3 3 0l3 9V2q2-3 3 0l1 13 3-12q2-2 3 1l-2 12 5-9q3-1 2 2l-5 13q-1 5-3 7z" fill="#fbfbfb" />
        </NavIcon>
      </button>
      <button type="button" aria-label="Zoom" className="ml-[22px]">
        <NavIcon>
          <Lens />
          <path d="M23 4h7M26.500 1v7M23 10h7" />
        </NavIcon>
      </button>
      <button type="button" aria-label="Fit" className="ml-[22px] flex items-center gap-[11px]">
        <NavIcon>
          <path d="M1 1h28v28H1z" stroke="#888" strokeDasharray="6 3" />
          <Lens />
        </NavIcon>
        <Caret className={caret} />
      </button>
      <button type="button" aria-label="Display Settings" className="ml-[13px] flex items-center gap-[5px]">
        <NavIcon>
          <path d="M12 24h6l1 3 3 2H8l3-2z" fill="#d5d8de" />
          <path d="M1 1h28v23H1z" fill="#f7f8fa" />
          <path d="M4 4h22v16H4z" fill="#97b8e0" stroke="#34588f" />
        </NavIcon>
        <Caret className={caret} />
      </button>
      <button type="button" aria-label="Grid and Snaps" className="ml-[15px] flex items-center gap-[5px]">
        <NavIcon>
          <defs>
            <linearGradient id="gridFade" x1="0" y1="0" x2="0" y2="1">
              <stop offset="0" stopColor="#fff" />
              <stop offset="1" stopColor="#9da5b3" />
            </linearGradient>
          </defs>
          <path d="M1 1h28v28H1z" fill="url(#gridFade)" />
          <path d="M5 1v28M9 1v28M13 1v28M17 1v28M21 1v28M25 1v28M1 5h28M1 9h28M1 13h28M1 17h28M1 21h28M1 25h28" stroke="#7d8490" strokeWidth="1" />
        </NavIcon>
        <Caret className={caret} />
      </button>
      <button type="button" aria-label="Viewports" className="ml-[15px] flex items-center gap-[5px]">
        <NavIcon>
          <path d="M1 3h28v24H1z" fill="#a5c3e6" stroke="#2f4f78" />
          <path d="M15 3v24M1 15h28" stroke="#2f4f78" strokeWidth="2" />
          <path d="M3 5.500h9v7H3zM18 5.500h9v7h-9zM3 17.500h9v7H3zM18 17.500h9v7h-9z" stroke="#5d83b3" strokeWidth="1" />
        </NavIcon>
        <Caret className={caret} />
      </button>
    </div>
  );
}

/* ---------- timeline ---------- */

const controls = [
  { name: "Go to start", d: "M1 2h4v28H1zM25 2v28L6 16z" },
  { name: "Step back", d: "M19 3v26L0 16zM21 10h4v12h-4z" },
  { name: "Play", d: "M1 0v32l23-16z" },
  { name: "Step forward", d: "M6 3v26l19-13zM0 10h4v12H0z" },
  { name: "Go to end", d: "M21 2h4v28h-4zM1 2v28l20-14z" },
];

const features = [
  { name: "Sketch1", art: <EditSketch /> },
  { name: "Extrude1", art: <Extrude /> },
  { name: "Shell1", art: <Shell /> },
  { name: "Sketch2", art: <EditSketch /> },
  { name: "Extrude2", art: <Extrude /> },
  { name: "Extrude3", art: <Extrude /> },
  { name: "Fillet1", art: <Fillet /> },
  { name: "Sketch3", art: <EditSketch /> },
  { name: "Split1", art: <Split /> },
  { name: "Move1", art: <Move /> },
];

function Timeline() {
  const gear = Array.from({ length: 8 }, (_, i) => i * 45);
  return (
    <footer className="flex h-[100px] shrink-0 items-center justify-between border-t-2 border-[#cacaca] bg-[#f1f1f1] pr-[26px] pl-[21px]">
      <div className="flex items-center">
        <div className="flex gap-6 text-[#4a4a4c]">
          {controls.map((c) => (
            <button key={c.name} type="button" aria-label={c.name}>
              <svg viewBox="0 0 26 32" className="h-8 w-[26px]" fill="currentColor" aria-hidden="true">
                <path d={c.d} />
              </svg>
            </button>
          ))}
        </div>
        <div className="relative mt-0.5 ml-[37px] h-16">
          <ol className="flex pt-3">
            {features.map((f, i) => (
              <li key={f.name} className="flex w-12 flex-col items-center">
                <button type="button" aria-label={f.name}>
                  <Icon size="size-8">{f.art}</Icon>
                </button>
                <span className="mt-1.5 h-2.5 w-1 bg-[#cacaca]" />
                <span className={`h-1 bg-[#cacaca] ${i === 0 ? "w-[26px] self-end" : i === 9 ? "w-[26px] self-start" : "w-full"}`} />
              </li>
            ))}
          </ol>
          <svg viewBox="0 0 24 64" className="absolute top-0 -right-3 h-16 w-6" fill="#666" aria-hidden="true">
            <path d="M0 0h24v9l-9 9h-1v46h-4V18H9L0 9z" />
          </svg>
        </div>
      </div>
      <button type="button" aria-label="Timeline settings">
        <svg viewBox="-16 -16 32 32" className="size-8" fill="#999" aria-hidden="true">
          {gear.map((a) => (
            <rect key={a} x="-3.5" y="-16" width="7" height="9" transform={`rotate(${a})`} />
          ))}
          <circle r="8.500" fill="none" stroke="#999" strokeWidth="5.500" />
        </svg>
      </button>
    </footer>
  );
}

/* ---------- window ---------- */

export default function App() {
  return (
    <div className="flex h-screen bg-white px-28 pt-[76px] pb-[148px] font-['Noto_Sans',sans-serif]">
      <main className="flex min-w-0 flex-1 flex-col overflow-hidden rounded-[10px] shadow-[0_0_0_1px_rgba(0,0,0,0.25),0_44px_90px_rgba(0,0,0,0.44)]">
        <header className="relative flex h-11 shrink-0 items-center justify-center border-b-2 border-[#aeaeae] bg-linear-to-b from-[#e8e8e8] to-[#cdcdcd]">
          <div className="absolute left-4 flex gap-4">
            <button type="button" aria-label="Close" className="size-6 rounded-full border border-[#dd5549] bg-[#ee6a5f]" />
            <button type="button" aria-label="Minimize" className="size-6 rounded-full border border-[#dca03a] bg-[#f6be50]" />
            <button type="button" aria-label="Zoom window" className="size-6 rounded-full border border-[#51a842] bg-[#62c655]" />
          </div>
          <h1 className="pt-1 font-['Inter',sans-serif] text-[26px] leading-8 text-[#464646]">Autodesk Fusion 360 (Education License)</h1>
        </header>
        <TopBar />
        <Ribbon />
        <section className="relative flex min-h-0 flex-1 items-center justify-center bg-white">
          <Model />
          <ViewCube />
          <NavBar />
        </section>
        <Timeline />
      </main>
    </div>
  );
}
